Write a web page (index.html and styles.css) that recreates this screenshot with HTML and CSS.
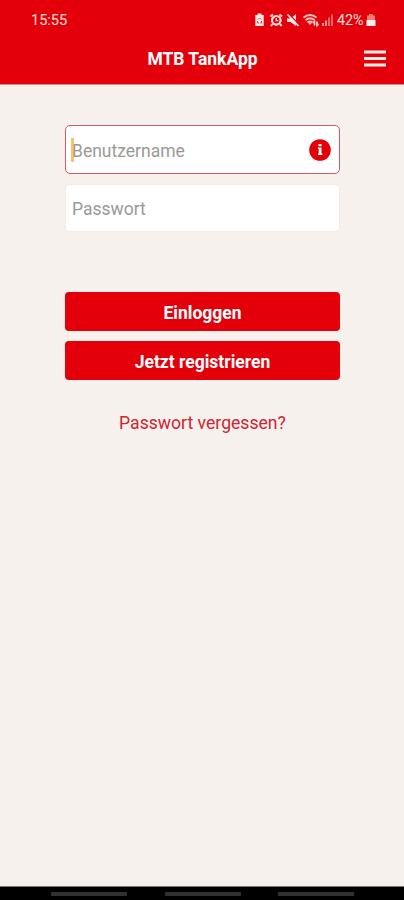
FILE: index.html
```html
<!DOCTYPE html>
<html lang="de">
<head>
<meta charset="utf-8">
<title>MTB TankApp</title>
<link rel="stylesheet" href="styles.css">
</head>
<body>
<header class="header">
  <div class="status">
    <span class="clock">15:55</span>
    <div class="indicators">
      <svg class="icons" width="80" height="14" viewBox="0 0 80 14">
        <path fill="#ffe8e4" d="M3.500 .5h4V2H9.700v11H1.300V2h2.200z"/>
        <path fill="none" stroke="#e8413f" stroke-width="1" d="M4 6.500l1.500-1.500L7 6.500M3.500 8v2H5M7.500 8v2H6"/>
        <path fill="none" stroke="#ffe0dc" stroke-width="2" d="M16.500 3.500l2.500-2M25.500 1.500l2.500 2M18.500 11l-1.500 2M26 11l1.500 2"/>
        <circle cx="22.300" cy="7.300" r="4.300" fill="none" stroke="#ffe0dc" stroke-width="2.200"/>
        <path fill="none" stroke="#ffe0dc" stroke-width="1.300" d="M22.300 5v2.700h2"/>
        <path fill="#ffe8e4" d="M33 5.500h3.500L42 1v12l-5.500-4H33z"/>
        <path stroke="#e3000b" stroke-width="1.300" d="M35 1l10 10.500"/>
        <path stroke="#ffe8e4" stroke-width="1.800" d="M33.500 1.500L44.500 13"/>
        <path fill="none" stroke="#ffc2bd" stroke-width="1.900" d="M49.500 4.500q6.500-5 13 0M51.500 7q4.500-3.500 9 0M53.500 9.500q2.500-2 5 0"/>
        <path fill="#ffc2bd" d="M54 9.500h4L56 12z"/>
        <path fill="none" stroke="#ffd9d4" stroke-width="1.600" d="M60.500 12.500V8.500L59 10M63 8.500v4l1.500-1.500"/>
        <path fill="#ff9c98" d="M68 10h2v3h-2zM71 7.500h2V13h-2z"/>
        <path fill="#f06763" d="M74 4.500h2V13h-2zM77 1.500h2V13h-2z"/>
      </svg>
      <span class="percent">42%</span>
      <svg class="battery" width="10" height="13" viewBox="0 0 10 13">
        <path fill="#f67974" d="M3 0h4v1.500h2V6H1V1.500h2z"/>
        <path fill="#fff0ed" d="M.5 6h9v6h-9z"/>
      </svg>
    </div>
  </div>
  <div class="bar">
    <h1 class="title">MTB TankApp</h1>
    <svg class="menu" width="22" height="18" viewBox="0 0 22 18"><path fill="#ffebe8" d="M0 .5h22v3H0zM0 7h22v3H0zM0 13.500h22v3H0z"/></svg>
  </div>
</header>
<main class="content">
  <div class="field field-active">
    <span class="placeholder">Benutzername</span>
    <span class="caret"></span>
    <svg class="info" width="22" height="22" viewBox="0 0 22 22"><circle cx="11" cy="11" r="10.800" fill="#e3000b"/><path fill="#fff" d="M9.500 5h3v2.300h-3zM9 8.500h3.500v6h.8V16H9v-1.500h.7V10H9z"/></svg>
  </div>
  <div class="field">
    <span class="placeholder">Passwort</span>
  </div>
  <div class="actions">
    <div class="button">Einloggen</div>
    <div class="button">Jetzt registrieren</div>
  </div>
  <a class="forgot">Passwort vergessen?</a>
</main>
<footer class="nav"><span class="handle"></span><span class="handle"></span><span class="handle"></span></footer>
</body>
</html>
```
FILE: styles.css
```css
* { box-sizing: border-box; }
body {
  margin: 0;
  height: 900px;
  display: flex;
  flex-direction: column;
  background: #f6f1ed;
  font-family: Roboto, "Liberation Sans", sans-serif;
  overflow: hidden;
}
.header {
  height: 85px;
  background: #e3000b;
  border-bottom: 1px solid #eb8581;
  color: #fff;
}
.status {
  height: 38px;
  padding: 2px 28px 0 31px;
  display: flex;
  align-items: center;
  justify-content: space-between;
}
.clock { font-size: 14.500px; color: #ffe1dd; }
.indicators { display: flex; align-items: center; }
.icons { margin-right: 3px; }
.percent { width: 28px; font-size: 14.300px; color: #ffe1dd; white-space: nowrap; }
.battery { margin-left: 1px; }
.bar {
  height: 42px;
  padding: 0 18px 0 41px;
  display: flex;
  align-items: center;
}
.title {
  flex: 1;
  margin: 0;
  text-align: center;
  font-size: 17.500px;
  line-height: 24px;
  font-weight: 700;
}
.content {
  flex: 1;
  padding: 40px 64px 0 65px;
  display: flex;
  flex-direction: column;
}
.field {
  height: 48px;
  padding: 0 8px 0 6px;
  display: flex;
  align-items: center;
  background: #fff;
  border: 1px solid #f1ecea;
  border-radius: 4px;
  color: #999;
  font-size: 17.500px;
}
.field-active {
  position: relative;
  height: 49px;
  margin-bottom: 10px;
  border-color: #cb5f69;
  border-radius: 5px;
}
.caret {
  position: absolute;
  left: 5px;
  top: 12px;
  width: 3px;
  height: 24px;
  background: rgba(242, 170, 50, .7);
}
.placeholder { flex: 1; padding-top: 2px; }
.info { flex: none; }
.actions {
  margin-top: 60px;
  display: flex;
  flex-direction: column;
  gap: 10px;
}
.button {
  height: 39px;
  display: flex;
  align-items: center;
  justify-content: center;
  padding-top: 3px;
  background: #e3000b;
  border-radius: 4px;
  color: #fff;
  font-size: 17.500px;
  font-weight: 700;
}
.forgot {
  margin-top: 31px;
  align-self: center;
  color: #cf2432;
  font-size: 17.600px;
  line-height: 24px;
}
.nav {
  height: 14px;
  padding: 5px 50px 0 51px;
  display: flex;
  justify-content: space-between;
  background: #000;
  border-top: 1px solid #777;
}
.handle { width: 76px; height: 4px; background: #303230; border-radius: 1px; }
```
